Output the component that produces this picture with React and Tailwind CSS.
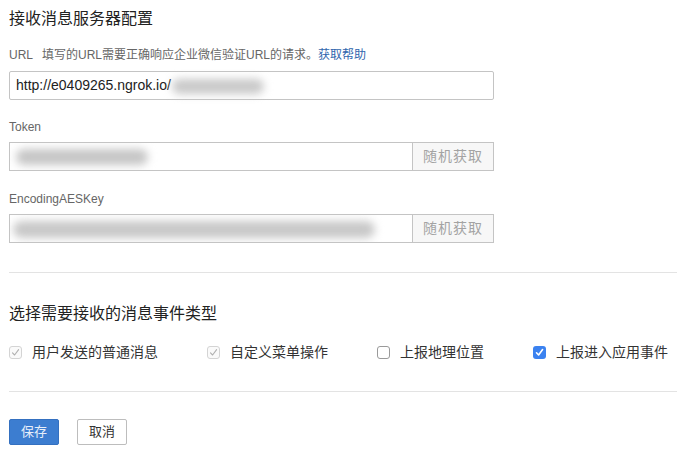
import React from "react";

const font = { fontFamily: '"Liberation Sans", "Noto Sans CJK SC", sans-serif' };

const events = [
  { id: "msg", label: "用户发送的普通消息", state: "locked" },
  { id: "menu", label: "自定义菜单操作", state: "locked" },
  { id: "geo", label: "上报地理位置", state: "off" },
  { id: "enter", label: "上报进入应用事件", state: "on" },
];

const Check = ({ state }) => {
  if (state === "off") {
    return <span className="w-[13px] h-[13px] rounded-[3px] border border-[#9a9a9a] bg-white shrink-0" />;
  }
  const on = state === "on";
  return (
    <span
      className={`w-[13px] h-[13px] rounded-[3px] shrink-0 flex items-center justify-center ${
        on ? "bg-[#3b82f0]" : "border border-[#d4d4d4] bg-[#fafafa]"
      }`}
    >
      <svg width="9" height="9" viewBox="0 0 9 9" fill="none">
        <path
          d="M1.5 4.8 L3.6 7 L7.6 1.6"
          stroke={on ? "#ffffff" : "#b0b0b0"}
          strokeWidth={on ? 1.6 : 1.1}
          strokeLinecap="round"
          strokeLinejoin="round"
        />
      </svg>
    </span>
  );
};

const SecretField = ({ children }) => (
  <div className="flex w-[485px] h-[29px]">
    <div className="relative flex-1 border border-[#c4c4c4] bg-white overflow-hidden">{children}</div>
    <button className="w-[81px] border border-l-0 border-[#c4c4c4] bg-[#f7f7f7] text-[14px] text-[#a3a3a3] tracking-[1px]">
      随机获取
    </button>
  </div>
);

export default function App() {
  return (
    <div className="w-[677px] h-[453px] bg-white pl-[9px] pt-[7px]" style={font}>
      {/* Server config */}
      <h2 className="text-[16px] leading-6 text-[#222]">接收消息服务器配置</h2>

      <p className="mt-[15px] text-[12px] leading-[18px] text-[#666]">
        URL<span className="ml-[9px]">填写的URL需要正确响应企业微信验证URL的请求。</span>
        <span className="text-[#2f66ad]">获取帮助</span>
      </p>
      <div className="relative mt-[7px] w-[485px] h-[29px] border border-[#c4c4c4] rounded-[2px] flex items-center pl-[6px] text-[14px] text-[#222]">
        http://e0409265.ngrok.io/
        <span className="absolute left-[162px] top-[7px] w-[92px] h-[15px] rounded-full bg-[#c9c9c9] blur-[4px]" />
      </div>

      <p className="mt-[18px] text-[12px] leading-[18px] text-[#666]">Token</p>
      <div className="mt-[6px]">
        <SecretField>
          <span className="absolute left-[6px] top-[6px] w-[132px] h-[16px] rounded-full bg-[#c6c6c6] blur-[4px]" />
        </SecretField>
      </div>

      <p className="mt-[19px] text-[12px] leading-[18px] text-[#666]">EncodingAESKey</p>
      <div className="mt-[6px]">
        <SecretField>
          <span className="absolute left-[3px] top-[6px] w-[362px] h-[17px] rounded-full bg-[#c8c8c8] blur-[4px]" />
        </SecretField>
      </div>

      <div className="mt-[29px] h-px bg-[#e3e3e3]" />

      {/* Event types */}
      <h2 className="mt-[29px] text-[16px] leading-6 text-[#222]">选择需要接收的消息事件类型</h2>
      <div className="mt-[16px] flex items-center gap-[49px] text-[14px] leading-5 text-[#333]">
        {events.map((e) => (
          <label key={e.id} className="flex items-center gap-[10px]">
            <Check state={e.state} />
            <span>{e.label}</span>
          </label>
        ))}
      </div>

      <div className="mt-[29px] h-px bg-[#e3e3e3]" />

      <div className="mt-[27px] flex gap-[18px]">
        <button className="w-[50px] h-[26px] rounded-[2px] bg-[#3c7dd0] border border-[#3470c0] text-[13px] text-[#e6eefa]">
          保存
        </button>
        <button className="w-[50px] h-[26px] rounded-[2px] bg-white border border-[#bdbdbd] text-[13px] text-[#333]">
          取消
        </button>
      </div>
    </div>
  );
}
